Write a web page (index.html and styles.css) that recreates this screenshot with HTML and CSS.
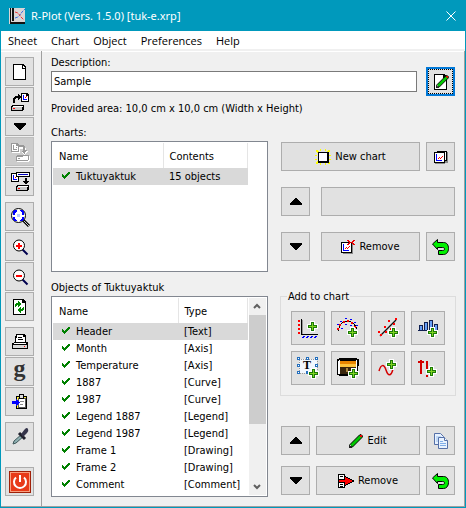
FILE: index.html
```html
<!DOCTYPE html>
<html lang="en">
<head>
<meta charset="utf-8">
<title>R-Plot (Vers. 1.5.0) [tuk-e.xrp]</title>
<link rel="stylesheet" href="styles.css">
</head>
<body>
<svg class="defs" aria-hidden="true">
  <defs>
    <symbol id="plus" viewBox="0 0 11 11"><path d="M3 0h5v3h3v5h-3v3h-5v-3h-3v-5h3z" fill="#fff"/><path d="M4 1h3v3h3v3h-3v3h-3v-3h-3v-3h3z" fill="#1c7a08"/><path d="M5 2h1v3h3v1h-3v3h-1v-3h-3v-1h3z" fill="#7ed321"/></symbol>
    <symbol id="drive" viewBox="0 0 13 6"><path d="M1 0h12v5h-1v1h-12v-5h1z" fill="#000"/><path d="M2 1h10v1h-10z" fill="#fff"/><path d="M1 2h10v3h-10z" fill="#c8c8c8"/><path d="M2 3h2v1h-2z" fill="#f00"/></symbol>
    <symbol id="sheet" viewBox="0 0 8 9"><path d="M0 0h6l2 2v7h-8z" fill="#000"/><path d="M1 1h4v2h2v5h-6z" fill="#fff"/><path d="M2 2h1v4h3v1h-4z" fill="#00f"/><path d="M5 3h1v1h-1v1h-1v-1h1z" fill="#f00"/></symbol>
    <symbol id="up" viewBox="0 0 12 7"><path d="M5 0h2v1h1v1h1v1h1v1h1v1h1v2h-12v-2h1v-1h1v-1h1v-1h1v-1h1z"/></symbol>
    <symbol id="down" viewBox="0 0 12 7"><path d="M0 0h12v2h-1v1h-1v1h-1v1h-1v1h-1v1h-2v-1h-1v-1h-1v-1h-1v-1h-1v-1h-1z"/></symbol>
    <symbol id="undo" viewBox="0 0 17 16"><path d="M.5 5 5.500.5v3h6c3.500 0 5 2.500 5 6s-2 6-5 6h-5v-4h4c1.500 0 2-.5 2-1.500s-.5-1.500-2-1.500h-5v2z" fill="#00f000" stroke="#000"/></symbol>
    <symbol id="pencil" viewBox="0 0 14 14"><path d="m.5 13.500.5-3 9.500-9.500 1.500-.5 1.500 1.500-.5 1.500-9.500 9.500z" fill="#00c800" stroke="#000"/><path d="M11 1h2v2h-2z" fill="#e00"/><path d="M0 11h2l1 2v1H0z" fill="#222"/><path d="M1 11h1v1h-1z" fill="#ccc"/></symbol>
    <symbol id="check" viewBox="0 0 8 8"><path d="M0 2h1v1h1v1h1v-1h1v-1h1v-1h1v-1h2v2h-1v1h-1v1h-1v1h-1v1h-1v1h-1v-1h-1v-1h-1z" fill="#008000"/></symbol>
    <symbol id="lens" viewBox="0 0 29 29"><path d="m17.500 17.500 5 5" stroke="#000050" stroke-width="2"/><circle cx="14" cy="13.500" r="5.500" fill="#fff" stroke="#000"/></symbol>
    <symbol id="chart" viewBox="0 0 11 11"><path d="M0 0h11v11h-11z" fill="#000"/><path d="M1 1h9v9h-9z" fill="#fff"/><path d="M2 2h1v6h5v1h-6z" fill="#00f"/><path d="M4 6h1v1h-1zM5 5h1v1h-1zM6 6h1v1h-1zM7 5h1v1h-1zM8 4h1v1h-1z" fill="#f00"/></symbol>
  </defs>
</svg>
<div class="window">
  <header class="titlebar">
    <svg class="logo" width="16" height="16" viewBox="0 0 16 16"><path d="M0 0h16v16H0z" fill="#d9d5d5"/><path d="M1 0h1v14h14v2H1zM3 0h2v13H3z" fill="#111"/><path d="m6 10 3-1 2-2 2-3 3-3" fill="none" stroke="#3b6fe0" stroke-dasharray="3 1"/><path d="m6 4 3 1 3 4 3 3" fill="none" stroke="#e33" stroke-dasharray="3 1"/></svg>
    <h1>R-Plot (Vers. 1.5.0) [tuk-e.xrp]</h1>
    <button class="close" aria-label="Close"><svg width="10" height="10" viewBox="0 0 10 10"><path d="m.5.5 9 9m0-9-9 9" stroke="#fff" fill="none"/></svg></button>
  </header>
  <nav class="menu"><a href="#">Sheet</a><a href="#">Chart</a><a href="#">Object</a><a href="#">Preferences</a><a href="#">Help</a></nav>
  <div class="body">
    <aside class="tools">
      <div class="group">
        <button class="btn icon" aria-label="New sheet"><svg class="px" viewBox="0 0 29 29"><path d="M8 7h10l3 3v13H8z"/><path d="M9 8h8v4h3v10H9z" fill="#fff"/><path d="M18 9h1v1h1v1h-2z" fill="#fff"/></svg></button>
        <button class="btn icon" aria-label="Open"><svg class="px" viewBox="0 0 29 29"><use href="#drive" x="6" y="18" width="13" height="6"/><use href="#sheet" x="16" y="6" width="8" height="9"/><path d="M8 11h1v-1h1V9h3V7h1v1h1v1h1v2h-1v1h-1v1h-1v-2h-2v1h-1v4H8z"/></svg></button>
        <button class="btn icon short" aria-label="Recent files"><svg class="tri" viewBox="0 0 12 7"><use href="#down"/></svg></button>
        <button class="btn icon" disabled aria-label="Save"><svg class="px" viewBox="0 0 29 29"><path d="M7 7h6l2 2v7H7z" fill="#fff"/><path d="M6 6h6l2 2v7H6zm1 1v7h6V9h-2V7z" fill="#999" fill-rule="evenodd"/><path d="M8 8h1v4h3v1H8zm3 2h1v1h-1z" fill="#999"/><path d="M15 9h5v2h1v3h2v1h-1v1h-1v1h-1v1h-1v-1h-1v-1h-1v-1h2v-3h-4z" fill="#fff"/><path d="M14 8h5v1h1v4h2v1h-1v1h-1v2h-1v-1h-1v-1h-1v-1h1v-4h-4z" fill="#999"/><path d="M13 19h12v5h-1v1H12v-5h1z" fill="#fff"/><path d="M12 18h12v5h-1v1H11v-5h1zm0 2v3h11v-4z" fill="#999" fill-rule="evenodd"/><path d="M13 21h2v1h-2z" fill="#999"/></svg></button>
        <button class="btn icon" aria-label="Save as"><svg class="px" viewBox="0 0 29 29"><use href="#drive" x="11" y="18" width="13" height="6"/><use href="#sheet" x="6" y="6" width="8" height="9"/><path d="M11 5h14v5H11z"/><path d="M12 6h12v3H12z" fill="#fff"/><path d="M13 7h10v1H13z" fill="#0000c0"/><path d="M20 11h2v3h2v1h-1v1h-1v1h-2v-1h-1v-1h-1v-1h2z"/></svg></button>
      </div>
      <div class="group">
        <button class="btn icon" aria-label="Fit to window"><svg viewBox="0 0 29 29"><path d="m18 18 6 6" stroke="#000" stroke-width="3"/><path d="m19 19 5 5" stroke="#ccc"/><circle cx="13.500" cy="13.500" r="7" fill="#fff" stroke="#000"/><path class="px" d="M9 8h3v2h-1v1h-1v2H8V9h1zm6 0h3v1h1v4h-2v-3h-1v-1h-1zm-7 7h2v2h1v1h1v1H9v-1H8zm9 0h2v3h-1v1h-3v-1h1v-1h1z" fill="#00f"/><path d="M12 12h3v3h-3z" fill="#b8c8ff"/></svg></button>
        <button class="btn icon" aria-label="Zoom in"><svg viewBox="0 0 29 29"><use href="#lens"/><path d="M13 11h2v2h2v2h-2v2h-2v-2h-2v-2h2z" fill="#f00"/></svg></button>
        <button class="btn icon" aria-label="Zoom out"><svg viewBox="0 0 29 29"><use href="#lens"/><path d="M11 13h6v2h-6z" fill="#f00"/></svg></button>
        <button class="btn icon" aria-label="Refresh"><svg class="px" viewBox="0 0 29 29"><path d="M8 7h10l3 3v13H8z"/><path d="M9 8h8v3h3v11H9z" fill="#fff"/><path d="M10 14v-2h1v-1h2V9h1v1h1v1h1v2h-1v1h-1v1h-1v-2h-1v1h-1v1h-1zM19 15v3h-1v1h-2v2h-1v-1h-1v-1h-1v-2h1v-1h1v-1h1v2h1v-1h1v-1z" fill="#080"/></svg></button>
      </div>
      <div class="group">
        <button class="btn icon" aria-label="Print"><svg class="px" viewBox="0 0 29 29"><path d="M11 7h8l2 2v6h2v7H7v-6h2v-1h1V9h1z"/><path d="M12 8h6v2h2v5h-9v-4h1z" fill="#fff"/><path d="M13 10h4v1h-4zm0 2h5v1h-5z"/><path d="M9 16h12v1H9z" fill="#fff"/><path d="M8 18h14v3H8z" fill="#d8d8d8"/><path d="M19 19h1v1h-1z" fill="#f00"/></svg></button>
        <button class="btn icon glyph" aria-label="Ghostscript">g</button>
        <button class="btn icon" aria-label="Paste"><svg class="px" viewBox="0 0 29 29"><path d="M11 9h11v13H11z" fill="#000"/><path d="M12 10h9v11h-9z" fill="#ffef40"/><path d="M13 11h7v9h-7z" fill="#fff" stroke="#555"/><path d="M14 7h5v5h-5z"/><path d="M15 8h3v3h-3z" fill="#ddd"/><path d="M15 14h4v1h-4zm0 3h3v1h-3z" fill="#888"/><path d="M7 14h4v-2h1v1h1v1h1v1h1v1h-1v1h-1v1h-1v1h-1v-2H7z" fill="#00f"/></svg></button>
      </div>
      <div class="group">
        <button class="btn icon" aria-label="Pick colour"><svg viewBox="0 0 29 29"><path d="m8 22 1-3 8-7 2 2-8 7z" fill="#8fb0b2" stroke="#41595c"/><path d="m14 11 6 6" stroke="#20202c" stroke-width="3"/><path d="m16 12 4-5q2-2 3 0t-1 4l-4 4z" fill="#34344a"/></svg></button>
      </div>
      <div class="group last">
        <button class="btn icon" aria-label="Exit"><svg viewBox="0 0 29 29"><path d="M4 4h22v22H4z" fill="#a02008"/><path d="M5 5h20v20H5z" fill="#f9a080"/><path d="M6 6h18v18H6z" fill="#e83a18"/><path d="M11 10.500a6 6 0 1 0 8 0M15 8v7" stroke="#fff" stroke-width="2" fill="none"/></svg></button>
      </div>
    </aside>
    <main class="main">
      <section class="description">
        <div class="field"><label for="desc">Description:</label><input id="desc" type="text" value="Sample"></div>
        <button class="btn icon focused" aria-label="Edit description"><svg class="px" viewBox="0 0 29 29"><path d="M8 7h10l3 3v13H8z"/><path d="M9 8h8v3h3v11H9z" fill="#fff"/></svg><svg class="overlay" viewBox="0 0 29 29"><use href="#pencil" x="10" y="8" width="13" height="13"/></svg></button>
      </section>
      <p class="area">Provided area: 10,0 cm x 10,0 cm (Width x Height)</p>
      <div class="columns charts">
        <section>
          <h2>Charts:</h2>
          <div class="list">
            <table class="t-charts">
              <thead><tr><th>Name</th><th>Contents</th></tr></thead>
              <tbody><tr class="selected"><td><svg class="check"><use href="#check"/></svg>Tuktuyaktuk</td><td>15 objects</td></tr></tbody>
            </table>
          </div>
        </section>
        <section class="actions">
          <div class="row"><button class="btn wide"><svg class="px i16" viewBox="0 0 16 16"><path d="M1 1h2v1h1v1h8V2h1V1h2v2h-1v1h-1v8h1v1h1v2h-2v-1h-1v-1H4v1H3v1H1v-2h1v-1h1V4H2V3H1zM5 0h1v2H5zm5 0h1v2h-1zM0 6h2v1H0zm0 4h2v1H0zm14-4h2v1h-2zm0 4h2v1h-2zm-9 4h1v2H5zm5 0h1v2h-1z" fill="#ff0"/><path d="M3 3h11v11H3z"/><path d="M4 4h8v8H4z" fill="#fff"/></svg>New chart</button>
            <button class="btn icon" aria-label="Duplicate chart"><svg class="px" viewBox="0 0 29 29"><path d="M12 10h10v11H12z" fill="#888"/><use href="#chart" x="11" y="9" width="10" height="10"/><path d="M9 12h10v10H9z" fill="#888"/><use href="#chart" x="8" y="10" width="11" height="11"/></svg></button></div>
          <div class="row"><button class="btn icon" aria-label="Move chart up"><svg class="tri" viewBox="0 0 12 7"><use href="#up"/></svg></button><button class="btn wide indent" aria-label="Chart options"></button></div>
          <div class="row"><button class="btn icon" aria-label="Move chart down"><svg class="tri" viewBox="0 0 12 7"><use href="#down"/></svg></button><button class="btn wide indent"><svg class="px i14" viewBox="0 0 14 14"><path d="M2 4h10v10H2z" fill="#888"/><use href="#chart" x="0" y="2" width="11" height="11"/><path d="M6 0h2v1h1v1h2V1h1V0h2v1h-1v1h-1v1h1v1h1v1h-2V4h-1V3h-2v1H8v1H6V4h1V3h1V2H7V1H6z" fill="#e00"/></svg>Remove</button>
            <button class="btn icon" aria-label="Undo chart change"><svg class="undo"><use href="#undo"/></svg></button></div>
        </section>
      </div>
      <div class="columns">
        <section>
          <h2>Objects of Tuktuyaktuk</h2>
          <div class="list scrolling">
            <table class="t-objects">
              <thead><tr><th>Name</th><th>Type</th></tr></thead>
              <tbody>
                <tr class="selected"><td><svg class="check"><use href="#check"/></svg>Header</td><td>[Text]</td></tr>
                <tr><td><svg class="check"><use href="#check"/></svg>Month</td><td>[Axis]</td></tr>
                <tr><td><svg class="check"><use href="#check"/></svg>Temperature</td><td>[Axis]</td></tr>
                <tr><td><svg class="check"><use href="#check"/></svg>1887</td><td>[Curve]</td></tr>
                <tr><td><svg class="check"><use href="#check"/></svg>1987</td><td>[Curve]</td></tr>
                <tr><td><svg class="check"><use href="#check"/></svg>Legend 1887</td><td>[Legend]</td></tr>
                <tr><td><svg class="check"><use href="#check"/></svg>Legend 1987</td><td>[Legend]</td></tr>
                <tr><td><svg class="check"><use href="#check"/></svg>Frame 1</td><td>[Drawing]</td></tr>
                <tr><td><svg class="check"><use href="#check"/></svg>Frame 2</td><td>[Drawing]</td></tr>
                <tr><td><svg class="check"><use href="#check"/></svg>Comment</td><td>[Comment]</td></tr>
              </tbody>
            </table>
            <div class="scrollbar"><svg viewBox="0 0 16 17"><path d="m5 10 3-3 3 3" fill="none" stroke="#606060" stroke-width="2"/></svg><div class="track"><div class="thumb"></div></div><svg viewBox="0 0 16 17"><path d="m5 7 3 3 3-3" fill="none" stroke="#606060" stroke-width="2"/></svg></div>
          </div>
        </section>
        <section class="actions objects">
          <fieldset>
            <legend>Add to chart</legend>
            <div class="palette">
              <button class="btn" aria-label="Add axis"><svg class="px" viewBox="0 0 34 34"><path d="M10 8h1v15h16v1H10z"/><path d="M11 9h1v14h-1z" fill="#999"/><path d="M7 9h2v2H7zm0 4h2v2H7zm0 4h2v2H7zm0 4h2v2H7z" fill="#f00"/><path d="M12 25h2v1h-1v1h-2v-1h1zm4 0h2v1h-1v1h-2v-1h1zm4 0h2v1h-1v1h-2v-1h1zm4 0h2v1h-1v1h-2v-1h1z" fill="#00f"/><use href="#plus" x="16" y="10" width="11" height="11"/></svg></button>
              <button class="btn" aria-label="Add curve"><svg class="px" viewBox="0 0 34 34"><path d="M7 20c2-6 4-10 9-10s8 3 10 8" fill="none" stroke="#000"/><path d="M6 17h2v2H6zm2-4h2v2H8zm4-3h2v2h-2zm4-1h2v2h-2zm4 2h2v2h-2zm3 4h2v2h-2z" fill="#f00"/><path d="M6 13h2v1H6zm3-3h2v1H9zm5-3h2v1h-2zm5 1h2v1h-2zm4 3h2v1h-2zm-13 6h2v1h-2zm4-4h2v1h-2zm5 1h2v1h-2zm6 0h2v1h-2z" fill="#00f"/><use href="#plus" x="16" y="16" width="11" height="11"/></svg></button>
              <button class="btn" aria-label="Add regression"><svg viewBox="0 0 34 34"><path d="M9 25 25 9" stroke="#111" stroke-width="1.300"/><path class="px" d="M24 7h2v2h-2zm-7 2h2v2h-2zm5 3h2v2h-2zm-9 3h2v2h-2zm6 2h2v2h-2zm-12 3h2v2H7zm7 0h2v2h-2zm-5 3h2v2H9z" fill="#f00"/><use class="px" href="#plus" x="17" y="16" width="11" height="11"/></svg></button>
              <button class="btn" aria-label="Add bars"><svg class="px" viewBox="0 0 34 34"><path d="M7 19h20v1H7zM8 14h4v6H8zM13 11h4v9h-4zM18 9h4v11h-4zM23 13h4v7h-4z" fill="#102050"/><path d="M9 15h2v4H9zM14 12h2v7h-2zM19 10h2v9h-2zM24 14h2v5h-2z" fill="#68a0f8"/><use href="#plus" x="16" y="16" width="11" height="11"/></svg></button>
              <button class="btn" aria-label="Add text"><svg class="px" viewBox="0 0 34 34"><path d="M8 8h18v14H8z" fill="#f2f7ff" stroke="#999" stroke-dasharray="1 1"/><path d="M6 6h3v3H6zm9 0h3v3h-3zm9 0h3v3h-3zM6 13h3v3H6zm18 0h3v3h-3zM6 20h3v3H6zm9 0h3v3h-3z" fill="#246fbd"/><path d="M7 7h1v1H7zm9 0h1v1h-1zm9 0h1v1h-1zM7 14h1v1H7zm18 0h1v1h-1zM7 21h1v1H7z" fill="#fff"/><text class="t" x="12" y="18">T</text><use href="#plus" x="17" y="17" width="11" height="11"/></svg></button>
              <button class="btn" aria-label="Add picture"><svg class="px" viewBox="0 0 34 34"><path d="M8 7h18v1h2v7h-1v9h-2v1H8v-1H6V8h2z"/><path d="M8 9h1v14H8zm17 0h1v14h-1zM7 10h1v13H7z" fill="#fff"/><path d="M9 10h16v3H9z" fill="#e98500"/><path d="M9 13h16v3H9z" fill="#ffc43c"/><path d="M9 16h16v7H9z" fill="#39250c"/><path d="M15 17h2v4h-2z" fill="#a8843c"/><use href="#plus" x="17" y="17" width="11" height="11"/></svg></button>
              <button class="btn" aria-label="Add function"><svg viewBox="0 0 34 34"><path d="M8 20c2-7 5-7 7-1s5 7 7-1" fill="none" stroke="#d40000" stroke-width="1.500"/><use class="px" href="#plus" x="15" y="8" width="11" height="11"/></svg></button>
              <button class="btn" aria-label="Add arrow"><svg class="px" viewBox="0 0 34 34"><path d="M9 9h2v1h2v2h-2v11H9V12H7v-2h2zM15 10h2v12h-2zM15 24h2v2h-2z" fill="#d40000"/><use href="#plus" x="15" y="15" width="11" height="11"/></svg></button>
            </div>
          </fieldset>
          <div class="row"><button class="btn icon" aria-label="Move object up"><svg class="tri" viewBox="0 0 12 7"><use href="#up"/></svg></button><button class="btn wide"><svg class="i14"><use href="#pencil"/></svg>Edit</button>
            <button class="btn icon" aria-label="Copy object"><svg viewBox="0 0 29 29"><path d="M8.500 7.500h6l3 3v8h-9z" fill="#e8f2ff" stroke="#5570a8"/><path d="M10 11h5m-5 2h5m-5 2h3" stroke="#99bfed"/><path d="M12.500 11.500h6l3 3v8h-9z" fill="#e8f2ff" stroke="#5570a8"/><path d="M18.500 11.500v3h3" fill="#fff" stroke="#5570a8"/><path d="M14 15.500h3m-3 2h6m-6 2h6" stroke="#80aee8"/></svg></button></div>
          <div class="row"><button class="btn icon" aria-label="Move object down"><svg class="tri" viewBox="0 0 12 7"><use href="#down"/></svg></button><button class="btn wide"><svg class="px i16" viewBox="0 0 16 16"><path d="M0 1h7v14H0z"/><path d="M1 2h5v4H1zm0 8h5v4H1z" fill="#fff"/><path d="M2 3h3v1H2zm0 8h3v1H2zm0 2h3v1H2z"/><path d="M0 7h7V3h1v1h2v1h2v1h2v1h2v2h-2v1h-2v1h-2v1H8v1H7V9H0z" fill="#000"/><path d="M1 7h6V4h1v1h2v1h2v1h2v2h-2v1h-2v1H8v1H7V9H1z" fill="#f00"/></svg>Remove</button>
            <button class="btn icon" aria-label="Undo object change"><svg class="undo"><use href="#undo"/></svg></button></div>
        </section>
      </div>
    </main>
  </div>
</div>
</body>
</html>
```
FILE: styles.css
```css
* { box-sizing: border-box; }
body {
  margin: 0;
  background: #f0f0f0;
  color: #000;
  font: 11px/17px "DejaVu Sans Condensed", "Noto Sans", sans-serif;
}
.defs { position: absolute; width: 0; height: 0; }
.window {
  min-height: 100vh;
  display: flex;
  flex-direction: column;
  border: 1px solid #0099bc;
  border-top: 0;
}
.titlebar {
  display: flex;
  align-items: center;
  gap: 6px;
  height: 31px;
  padding: 0 9px 0 8px;
  background: #0099bc;
  color: #fff;
}
.titlebar h1 { flex: 1; margin: 0; font: 11px/16px "Noto Sans", sans-serif; white-space: nowrap; }
.close { display: flex; padding: 0; border: 0; background: none; }
.menu {
  display: flex;
  gap: 14px;
  height: 18px;
  padding: 1px 7px;
  background: #fff;
}
.menu a { color: inherit; text-decoration: none; font: 11px/18px "Open Sans", sans-serif; }
.body {
  flex: 1;
  display: flex;
  margin-top: 2px;
  border: solid #a0a0a0;
  border-width: 0 1px 1px 0;
  box-shadow: inset 0 1px #fff;
}
.tools {
  display: flex;
  flex-direction: column;
  gap: 6px;
  width: 41px;
  padding: 6px 0 10px 4px;
  border-right: 1px solid #a0a0a0;
}
.group { display: flex; flex-direction: column; gap: 1px; }
.group.last { margin-top: auto; }
.main { flex: 1; min-width: 0; padding: 3px 9px 8px 9px; }
.btn {
  display: flex;
  align-items: center;
  justify-content: center;
  gap: 4px;
  height: 29px;
  padding: 0;
  border: 1px solid #adadad;
  background: #e1e1e1;
  color: #000;
  font: inherit;
}
.btn svg { flex: none; }
.icon { position: relative; width: 29px; flex: none; }
.icon > svg { width: 29px; height: 29px; }
.icon > .overlay { position: absolute; inset: -2px; }
.icon.short { height: 19px; }
.icon > .tri { width: 12px; height: 7px; }
.icon > .undo { width: 17px; height: 16px; }
.i16 { width: 16px; height: 16px; }
.i14 { width: 14px; height: 14px; }
.px, .tri, .check { shape-rendering: crispEdges; }
.btn:disabled { background: #cccccc; border-color: #bfbfbf; }
.glyph { font: bold 24px/20px "Liberation Serif", serif; color: #333; padding-bottom: 8px; }
.focused { border: 2px solid #0078d7; outline: 1px dotted #000; outline-offset: -3px; }
.description { display: flex; align-items: flex-end; gap: 9px; }
.description .icon { margin-bottom: -4px; }
.field { flex: 1; display: flex; flex-direction: column; }
.field input {
  height: 21px;
  width: 100%;
  padding: 0 2px;
  border: 1px solid #7a7a7a;
  background: #fff;
  font: inherit;
}
.area { margin: 8px 0 7px; }
h2 { margin: 0; font: inherit; }
.columns {
  display: grid;
  grid-template-columns: minmax(0, 1fr) 174px;
  gap: 13px;
}
.columns.charts { margin-bottom: 7px; }
.list {
  display: flex;
  min-height: 131px;
  padding: 1px;
  border: 1px solid #828790;
  background: #fff;
}
.list.scrolling { min-height: 201px; }
table { flex: none; align-self: flex-start; width: 195px; border-collapse: collapse; table-layout: fixed; }
th { height: 25px; padding: 1px 6px 0; border-right: 1px solid #e5e5e5; font-weight: 400; text-align: left; }
td { height: 17px; padding: 0 6px; line-height: 17px; white-space: nowrap; }
td:first-child { padding-left: 9px; }
.t-charts th:first-child { width: 110px; }
.t-objects th:first-child { width: 125px; }
.selected { background: #d9d9d9; }
.check { width: 8px; height: 8px; margin-right: 6px; }
.scrollbar { flex: 1; margin-left: 1px; display: flex; flex-direction: column; background: #f0f0f0; }
.scrollbar svg { width: 16px; height: 17px; }
.track { flex: 1; }
.thumb { height: 67%; background: #cdcdcd; }
.actions { display: flex; flex-direction: column; gap: 16px; padding-top: 18px; }
.row { display: flex; gap: 6px; }
.wide { flex: 1; }
.indent { margin-left: 5px; }
.objects { gap: 11px; padding-top: 9px; }
fieldset {
  min-width: 0;
  margin: 0 -1px 19px;
  padding: 0 9px 10px 10px;
  border: 1px solid #dcdcdc;
}
legend { margin-left: -4px; padding: 0 1px; }
.palette { display: grid; grid-template-columns: repeat(4, 34px); gap: 6px; margin-top: 6px; }
.palette .btn { height: 34px; }
.palette svg { width: 34px; height: 34px; }
.t { font: bold 12px "Liberation Serif", serif; }
```
